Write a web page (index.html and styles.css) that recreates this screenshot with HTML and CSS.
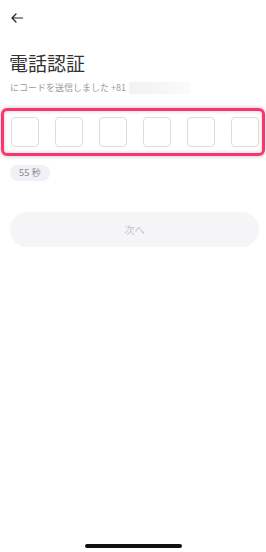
FILE: index.html
```html
<!DOCTYPE html>
<html lang="ja">
<head>
<meta charset="utf-8">
<link rel="stylesheet" href="styles.css">
</head>
<body>
<div class="screen">
  <div class="header">
    <svg class="back" width="12" height="10" viewBox="0 0 12 10">
      <path d="M11.5 5H1.2M5 1L1 5l4 4" fill="none" stroke="#222" stroke-width="1.2" stroke-linecap="round" stroke-linejoin="round"/>
    </svg>
  </div>
  <h1 class="title">電話認証</h1>
  <div class="sub">
    <span>にコードを送信しました +81</span>
    <span class="blur"></span>
  </div>
  <div class="highlight">
    <div class="codes">
      <div class="cell"></div>
      <div class="cell"></div>
      <div class="cell"></div>
      <div class="cell"></div>
      <div class="cell"></div>
      <div class="cell"></div>
    </div>
  </div>
  <div class="timer-row"><span class="timer">55 秒</span></div>
  <div class="btn-row"><div class="btn">次へ</div></div>
  <div class="spacer"></div>
  <div class="home-row"><div class="home"></div></div>
</div>
</body>
</html>
```
FILE: styles.css
```css
* { box-sizing: border-box; margin: 0; padding: 0; }
html, body { width: 266px; height: 552px; background: #fff; overflow: hidden; }
body { font-family: "Noto Sans CJK JP", "Noto Sans", sans-serif; color: #333; }
.screen { display: flex; flex-direction: column; height: 552px; }
.header { height: 36px; padding: 13px 0 0 11px; }
.back { display: block; }
.title { font-size: 19px; font-weight: 400; line-height: 24px; color: #333; padding-left: 9px; margin-top: 15px; letter-spacing: 0; }
.sub { display: flex; align-items: center; margin-top: 7px; padding-left: 10px; height: 12px; font-size: 9px; line-height: 12px; color: #9a9a9a; }
.blur { display: block; width: 62px; height: 12px; margin-left: 3px; background: linear-gradient(90deg, #f2f2f2, #f7f7f7 60%, #fbfbfb); border-radius: 2px; }
.highlight { margin: 14px 1px 0 1px; height: 48px; border: 3px solid #fb3470; border-radius: 6px; box-shadow: 0 0 4px rgba(0,0,0,0.25), inset 0 0 4px rgba(0,0,0,0.18); display: flex; align-items: center; padding-left: 7px; }
.codes { display: flex; gap: 16px; }
.cell { width: 28px; height: 30px; border: 1px solid #dcdcdc; border-radius: 4px; background: #fff; }
.timer-row { display: flex; padding-left: 10px; margin-top: 9px; }
.timer { display: block; height: 16px; line-height: 16px; padding: 0 9px; border-radius: 8px; background: #f0f1f6; color: #888; font-size: 9px; font-family: "Noto Sans", "Noto Sans CJK JP", sans-serif; }
.btn-row { display: flex; padding: 0 7px 0 10px; margin-top: 31px; }
.btn { flex: 1; height: 35px; border-radius: 18px; background: #f5f5f8; color: #c4c4c4; font-size: 10px; display: flex; align-items: center; justify-content: center; }
.spacer { flex: 1; }
.home-row { display: flex; justify-content: center; padding-bottom: 4px; }
.home { width: 97px; height: 4px; border-radius: 2px; background: #111; }
```
